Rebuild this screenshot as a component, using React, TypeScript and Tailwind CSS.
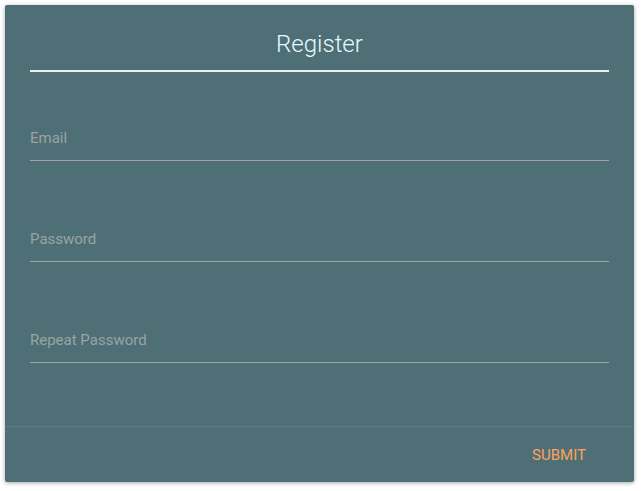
import React from "react";

const fields = ["Email", "Password", "Repeat Password"];

export default function App() {
  return (
    <div className="w-[641px] h-[491px] bg-white p-[5px]" style={{ fontFamily: "Roboto, 'Noto Sans', sans-serif" }}>
      <div className="w-[629px] h-[477px] bg-[#4f6f76] rounded-[2px] shadow-[0_1px_4px_rgba(0,0,0,0.35)] flex flex-col">
        <div className="px-[25px] flex-1">
          <div className="pt-[23px] pb-[10px] border-b-2 border-[#eeeeee] text-center text-[24px] leading-[32px] font-light text-[#e4fbff]">
            Register
          </div>
          {fields.map((f, i) => (
            <div
              key={f}
              className={`${i === 0 ? "mt-[56px]" : "mt-[68px]"} pb-[12px] border-b border-[#a3a3a3] text-[15px] leading-[20px] text-[#9aa3a4]`}
            >
              {f}
            </div>
          ))}
        </div>
        <div className="h-[56px] border-t border-[#5c7b82] flex items-center justify-end pr-[48px] pt-[1px]">
          <span className="text-[15px] text-[#ffa35c]">SUBMIT</span>
        </div>
      </div>
    </div>
  );
}
